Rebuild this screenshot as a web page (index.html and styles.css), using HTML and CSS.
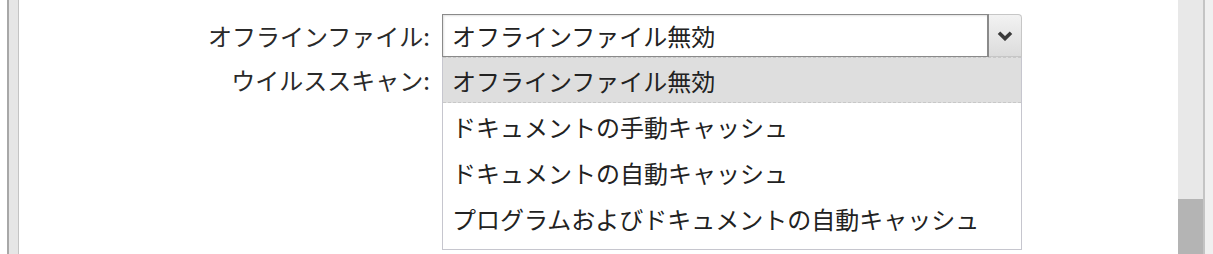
FILE: index.html
```html
<!DOCTYPE html>
<html lang="ja">
<head>
<meta charset="utf-8">
<title>オフラインファイル</title>
<link rel="stylesheet" href="styles.css">
</head>
<body>
<div class="page">
  <div class="side-rule"></div>
  <main class="form">
    <div class="row row-first">
      <label class="label">オフラインファイル:</label>
      <div class="select">
        <div class="select-value">オフラインファイル無効</div>
        <div class="select-button">
          <svg width="16" height="10" viewBox="0 0 16 10"><path d="M2 1.8 L8 7.6 L14 1.8" fill="none" stroke="#3a3a3a" stroke-width="3.6"/></svg>
        </div>
        <ul class="options">
          <li class="option selected">オフラインファイル無効</li>
          <li class="option">ドキュメントの手動キャッシュ</li>
          <li class="option">ドキュメントの自動キャッシュ</li>
          <li class="option">プログラムおよびドキュメントの自動キャッシュ</li>
        </ul>
      </div>
    </div>
    <div class="row">
      <label class="label">ウイルススキャン:</label>
      <div></div>
    </div>
  </main>
  <div class="scrollbar"><div class="thumb"></div></div>
</div>
</body>
</html>
```

FILE: styles.css
```css
html, body {
  margin: 0;
  padding: 0;
  background: #ffffff;
  height: 254px;
  overflow: hidden;
}
body {
  font-family: "Noto Sans CJK JP", "Noto Sans", sans-serif;
  font-size: 24px;
  color: #222222;
}
.page {
  display: flex;
  height: 254px;
}
.side-rule {
  margin-left: 7px;
  width: 9px;
  background: #e6e6e6;
  border-left: 2px solid #a8a8a8;
  border-right: 1px solid #c4c4c4;
  flex: none;
}
.form {
  flex: 1;
  display: flex;
  flex-direction: column;
  padding-top: 14px;
}
.row {
  display: grid;
  grid-template-columns: 411px 580px;
  column-gap: 12px;
  align-items: center;
  height: 46px;
}
.row-first {
  height: 43px;
}
.label {
  text-align: right;
  color: #2a2a2a;
  line-height: 1;
}
.select {
  position: relative;
  display: flex;
  height: 43px;
  box-sizing: border-box;
}
.select-value {
  flex: 1;
  box-sizing: border-box;
  border: 1px solid #8a8a8a;
  border-right-width: 2px;
  box-shadow: inset 1px 1px 2px rgba(0,0,0,0.12);
  padding-left: 9px;
  display: flex;
  align-items: center;
  background: #ffffff;
}
.select-button {
  width: 33px;
  box-sizing: border-box;
  background: linear-gradient(#f2f2f2, #dcdcdc);
  border: 1px solid #c6c6c6;
  border-left: none;
  border-top-right-radius: 4px;
  display: flex;
  align-items: center;
  justify-content: center;
}
.options {
  position: absolute;
  left: 0;
  top: 43px;
  width: 580px;
  margin: 0;
  padding: 0 0 8px 0;
  list-style: none;
  background: #ffffff;
  border: 1px solid #c6c6ce;
  border-top: none;
  box-sizing: border-box;
}
.option {
  height: 46px;
  display: flex;
  align-items: center;
  padding-left: 9px;
  box-sizing: border-box;
}
.option.selected {
  background: #dedede;
  border-top: 1px dashed #c8c8c8;
  border-bottom: 1px dashed #c8c8c8;
}
.scrollbar {
  flex: none;
  width: 25px;
  margin-right: 8px;
  background: #e8e8e8;
  border-right: 2px solid #c4c4c4;
  display: flex;
  flex-direction: column;
  justify-content: flex-end;
  position: relative;
}
.scrollbar::after {
  content: "";
  position: absolute;
  top: 0;
  bottom: 0;
  right: -10px;
  width: 8px;
  background: #f0f0f0;
}
.thumb {
  height: 55px;
  background: #b4b4b4;
}
```
